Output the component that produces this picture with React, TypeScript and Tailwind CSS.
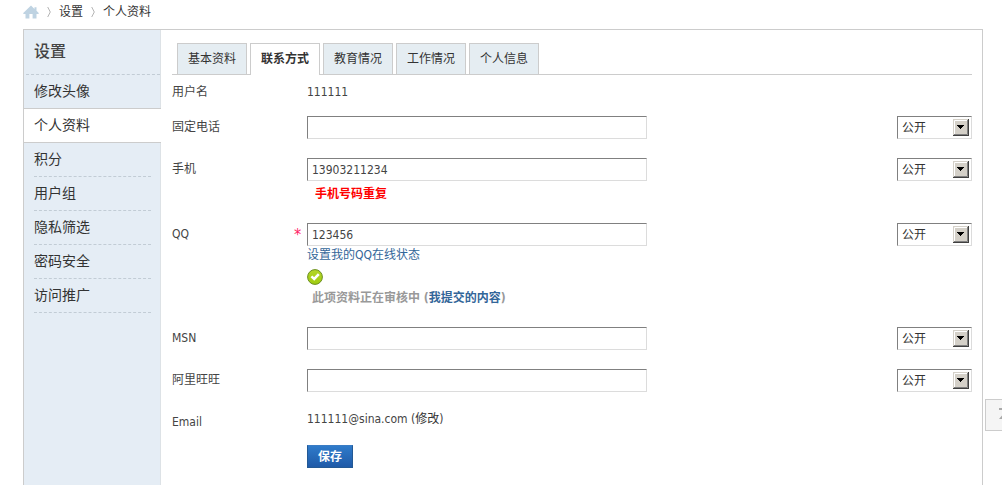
import React from "react";

const menu = ["修改头像", "个人资料", "积分", "用户组", "隐私筛选", "密码安全", "访问推广"];
const tabs = ["基本资料", "联系方式", "教育情况", "工作情况", "个人信息"];

function HomeIcon() {
  return (
    <svg viewBox="0 0 16 14" className="h-[14px] w-4" aria-hidden="true">
      <path d="M8 0.5 11.5 4V2.2h2v3.6L16 8.2l-.8.8H13.5v4.5H9.6V9H6.4v4.5H2.5V9H.8L0 8.2z" fill="#bfd3e2" />
    </svg>
  );
}

function Crumb() {
  return (
    <svg viewBox="0 0 4 12" className="mt-px h-3 w-1" aria-hidden="true">
      <path d="M.7 1 3.3 6 .7 11" fill="none" stroke="#b4b4b4" />
    </svg>
  );
}

function CheckIcon() {
  return (
    <svg viewBox="0 0 16 16" className="block size-4" role="img" aria-label="验证通过">
      <defs>
        <linearGradient id="okFill" x1="0" y1="0" x2="0" y2="1">
          <stop offset="0" stopColor="#b5d629" />
          <stop offset="1" stopColor="#a0cc10" />
        </linearGradient>
      </defs>
      <circle cx="8" cy="8" r="7.4" fill="url(#okFill)" stroke="#6c8f22" />
      <path d="M4.4 7.4 7.2 10 11.8 5.2" fill="none" stroke="#fff" strokeWidth="2.6" />
    </svg>
  );
}

function Privacy({ id, label }: { id: string; label: string }) {
  return (
    <div className="relative h-[23px] w-[75px] shrink-0">
      <select
        id={id}
        aria-label={label + "公开范围"}
        className="block h-full w-full appearance-none border border-t-[#808080] border-r-[#dcdcdc] border-b-[#dcdcdc] border-l-[#808080] bg-white pl-1 text-[12px] text-[#333]"
      >
        <option>公开</option>
        <option>好友可见</option>
        <option>保密</option>
      </select>
      <svg viewBox="0 0 16 17" className="pointer-events-none absolute top-[3px] right-[3px] h-[17px] w-4" aria-hidden="true">
        <path d="M0 0h16v17H0z" fill="#404040" />
        <path d="M0 0h15v16H0z" fill="#d4d0c8" />
        <path d="M1 15.5h13.5V1" fill="none" stroke="#808080" />
        <path d="M1.5 15V1.5H14" fill="none" stroke="#fff" />
        <path d="M4 6h7v1H4zM5 7h5v1H5zM6 8h3v1H6zM7 9h1v1H7z" fill="#000" />
      </svg>
    </div>
  );
}

interface FieldProps {
  id: string;
  label: string;
  value?: string;
  required?: boolean;
  className?: string;
  children?: React.ReactNode;
}

function Field({ id, label, value = "", required, className = "", children }: FieldProps) {
  return (
    <div className={"flex pt-[10px] " + className}>
      <label htmlFor={id} className="w-[122px] shrink-0 leading-[22px]">{label}</label>
      <span className="w-[13px] shrink-0 pt-[2px] text-[16px] leading-5 text-[#f26]">{required ? "*" : ""}</span>
      <div className="min-w-0 flex-1 pr-4">
        <input
          id={id}
          type="text"
          defaultValue={value}
          className="block h-[23px] w-full max-w-[340px] border border-t-[#808080] border-r-[#dcdcdc] border-b-[#dcdcdc] border-l-[#808080] bg-white px-1 text-[#444] outline-none"
        />
        {children}
      </div>
      <Privacy id={id + "-privacy"} label={label} />
    </div>
  );
}

export default function App() {
  return (
    <div className="flex min-h-screen flex-col bg-white pr-[19px] pl-[23px] font-['DejaVu_Sans_Condensed','Noto_Sans_CJK_SC',sans-serif] text-[12px] text-[#444]">
      <nav className="flex h-[29px] items-start gap-2 pt-1 leading-4 text-[#333]">
        <a href="#home" aria-label="首页" className="pt-px"><HomeIcon /></a>
        <span className="pt-px"><Crumb /></span>
        <a href="#settings">设置</a>
        <span className="pt-px"><Crumb /></span>
        <a href="#profile">个人资料</a>
      </nav>

      <div className="flex flex-1 border border-b-0 border-[#ccc]">
        <aside className="w-[137px] shrink-0 border-r border-[#dde2e6] bg-[#e5edf5]">
          <h1 className="ml-[2px] h-[45px] border-b border-dashed border-[#c2ccd5] pl-2 text-[16px] leading-[44px] font-medium text-[#444]">设置</h1>
          <ul className="text-[14px] text-[#333]">
            {menu.map((item, i) =>
              i === 1 ? (
                <li key={item} className="-mt-px -mr-px border-y border-[#ccc] bg-white pl-[10px]">
                  <a href="#profile" aria-current="page" className="block h-[33px] leading-8">{item}</a>
                </li>
              ) : (
                <li key={item} className="mr-[9px] ml-[10px] border-b border-dashed border-[#c2ccd5]">
                  <a href="#menu" className="block h-[33px] leading-8">{item}</a>
                </li>
              )
            )}
          </ul>
        </aside>

        <main className="min-w-0 flex-1 pt-[13px] pr-[10px] pl-[11px]">
          <div className="flex gap-[3px] border-b border-[#ccc] pl-[5px] leading-[30px] text-[#333]">
            {tabs.map((tab, i) => (
              <a
                key={tab}
                href="#tab"
                className={
                  i === 1
                    ? "-mb-px h-8 w-[70px] border border-b-0 border-[#ccc] bg-white text-center font-bold"
                    : "h-[31px] w-[70px] border border-b-0 border-[#ccc] bg-[#e5edf2] text-center"
                }
              >
                {tab}
              </a>
            ))}
          </div>

          <form onSubmit={(e) => e.preventDefault()}>
            <div className="flex h-[31px] pt-[6px] leading-[22px]">
              <span className="w-[135px] shrink-0">用户名</span>
              <span>111111</span>
            </div>
            <Field id="phone" label="固定电话" className="pb-[9px]" />
            <Field id="mobile" label="手机" value="13903211234" className="pb-[9px]">
              <p className="pt-[5px] pb-[2px] pl-2 leading-4 font-bold text-[#f00]">手机号码重复</p>
            </Field>
            <Field id="qq" label="QQ" value="123456" required className="pb-[11px]">
              <a href="#qq-status" className="block leading-[18px] text-[#369]">设置我的QQ在线状态</a>
              <div className="pt-[5px]"><CheckIcon /></div>
              <p className="pt-[5px] pl-[5px] leading-4 font-bold text-[#999]">
                此项资料正在审核中 (<a href="#submitted" className="text-[#369]">我提交的内容</a>)
              </p>
            </Field>
            <Field id="msn" label="MSN" className="pb-[9px]" />
            <Field id="wangwang" label="阿里旺旺" className="pb-[9px]" />
            <div className="flex h-[44px] pt-[10px]">
              <span className="w-[135px] shrink-0 leading-[22px]">Email</span>
              <span className="leading-4">111111@sina.com (<a href="#email" className="text-[#333]">修改</a>)</span>
            </div>
            <div className="pb-4 pl-[135px]">
              <button
                type="submit"
                className="block h-[23px] w-[46px] border border-[#235994] border-t-[#3a7cc4] bg-linear-to-b from-[#2f7bca] to-[#1f5aa8] leading-5 font-bold text-white"
              >
                保存
              </button>
            </div>
          </form>
        </main>
      </div>

      <div className="fixed right-0 bottom-[54px] h-8 w-[17px] overflow-hidden">
        <a href="#top" aria-label="返回顶部" className="block h-8 w-10 border border-[#ccc] bg-[#f5f5f5]">
          <svg viewBox="0 0 38 30" className="h-[30px] w-[38px]" aria-hidden="true">
            <path d="M13 8h12v2H13zM19 12l6 7h-4v5h-4v-5h-4z" fill="#aaa" />
          </svg>
        </a>
      </div>
    </div>
  );
}
